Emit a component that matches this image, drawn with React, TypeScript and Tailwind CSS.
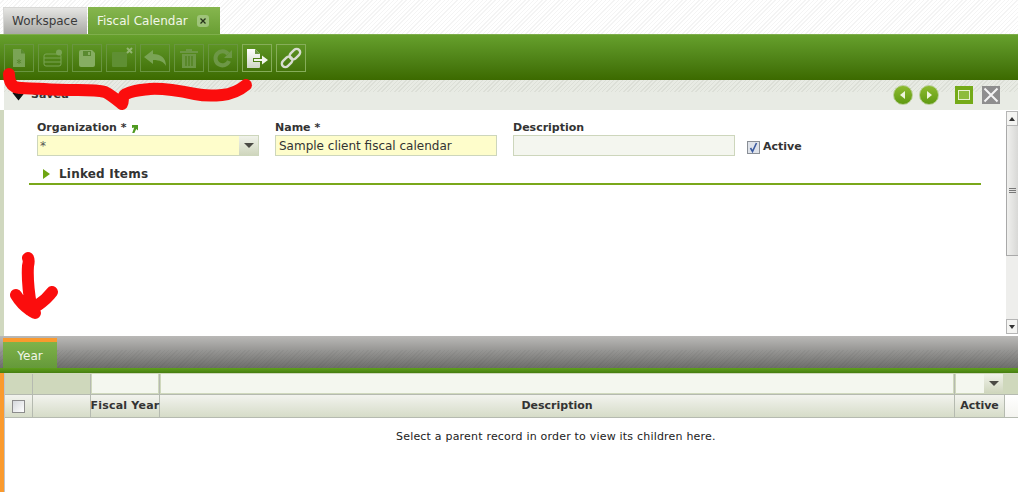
import React from "react";

const font = { fontFamily: '"DejaVu Sans", sans-serif' };

function ToolBtn({ children, active }: { children: React.ReactNode; active?: boolean }) {
  return (
    <div className={`w-[30px] h-[28px] flex items-center justify-center border ${active ? "border-[#86ad5a]" : "border-[#699540]"}`}>
      <svg width="24" height="24" viewBox="0 0 24 24">{children}</svg>
    </div>
  );
}

const dim = "#7aa455";
const dimDark = "#5a8a30";

function Toolbar() {
  return (
    <div className="h-[46px] bg-gradient-to-b from-[#66a02c] to-[#3c6a00] border-t border-[#7fae4c] flex items-center pl-[4px] gap-[4px] pt-[1px]">
      <ToolBtn>
        <path d="M6 3h8l4 4.5V21H6z" fill={dim} />
        <path d="M14 3l4 4.5h-4z" fill={dimDark} />
        <path d="M12 13v5M9.8 14.2l4.4 2.6M14.2 14.2l-4.4 2.6" stroke={dimDark} strokeWidth="1" />
      </ToolBtn>
      <ToolBtn>
        <rect x="3" y="8" width="17" height="12" rx="2" fill="none" stroke={dim} strokeWidth="1" />
        <path d="M3 12h17M3 16h17" stroke={dim} strokeWidth="1" />
        <circle cx="18" cy="6.5" r="3" fill={dim} />
      </ToolBtn>
      <ToolBtn>
        <path d="M4 6a2 2 0 012-2h11l3 3v12a2 2 0 01-2 2H6a2 2 0 01-2-2z" fill="#86ad62" />
        <rect x="8" y="5" width="8" height="5" fill={dimDark} />
        <rect x="13" y="6" width="2" height="3" fill="#86ad62" />
      </ToolBtn>
      <ToolBtn>
        <rect x="3" y="6" width="15" height="15" rx="1" fill="#5f8f33" />
        <path d="M18 2l5 5M23 2l-5 5" stroke="#93b572" strokeWidth="2" />
      </ToolBtn>
      <ToolBtn>
        <path d="M1 11l9-7v4c8 0 13 4 13 12-2-4-6-6-13-6v4z" fill={dim} />
      </ToolBtn>
      <ToolBtn>
        <path d="M3 5h18v2H3zM9 3h6v2H9z" fill="#6d9746" />
        <path d="M5 8h14v14H5z" fill="#6d9746" />
        <path d="M9 10v10M12 10v10M15 10v10" stroke="#4d7f18" strokeWidth="1.2" />
      </ToolBtn>
      <ToolBtn>
        <path d="M18 15a7 7 0 11-1-7" fill="none" stroke="#6d9746" strokeWidth="4" />
        <path d="M21 4v8h-8z" fill="#6d9746" />
      </ToolBtn>
      <ToolBtn active>
        <defs>
          <linearGradient id="docg" x1="0" y1="0" x2="0" y2="1">
            <stop offset="0" stopColor="#ffffff" />
            <stop offset="1" stopColor="#cfd6c6" />
          </linearGradient>
        </defs>
        <path d="M2 3h8l5 5v4H8v4h7v5a1 1 0 01-1 1H2z" fill="url(#docg)" />
        <path d="M10 3l5 5h-5z" fill="#6d9746" />
        <path d="M9 13h8v-3.5l6 4.5-6 4.5V15H9z" fill="#f2f5ec" />
      </ToolBtn>
      <ToolBtn active>
        <g fill="none" stroke="#d8ddd0" strokeWidth="2.4" transform="rotate(-45 12 12)">
          <rect x="0.5" y="8.5" width="12" height="7" rx="3.5" />
          <rect x="11.5" y="8.5" width="12" height="7" rx="3.5" />
        </g>
      </ToolBtn>
    </div>
  );
}

function RoundNav({ dir }: { dir: "l" | "r" }) {
  return (
    <div className="w-[20px] h-[20px] rounded-full bg-gradient-to-b from-[#8dbb2e] to-[#5f9a10] border border-[#b9cf96] flex items-center justify-center">
      <svg width="10" height="10" viewBox="0 0 10 10">
        <path d={dir === "l" ? "M7 1v8L2 5z" : "M3 1v8l5-4z"} fill="#eef5dc" />
      </svg>
    </div>
  );
}

function DropBtn({ className }: { className: string }) {
  return (
    <div className={`flex items-center justify-center bg-gradient-to-b from-[#f0f2ea] to-[#cfd6bd] ${className}`}>
      <div className="w-0 h-0 border-l-[5px] border-r-[5px] border-t-[5px] border-l-transparent border-r-transparent border-t-[#4a4a44]" />
    </div>
  );
}

function FieldLabel({ children }: { children: React.ReactNode }) {
  return <div className="text-[11px] leading-[14px] font-bold text-[#333]">{children}</div>;
}

function ScrollBtn({ up }: { up?: boolean }) {
  return (
    <div className="h-[15px] bg-[#f4f4f2] border border-[#b5b5b5] flex items-center justify-center">
      {up ? (
        <div className="w-0 h-0 border-l-[3px] border-r-[3px] border-b-[4px] border-l-transparent border-r-transparent border-b-[#333]" />
      ) : (
        <div className="w-0 h-0 border-l-[3px] border-r-[3px] border-t-[4px] border-l-transparent border-r-transparent border-t-[#333]" />
      )}
    </div>
  );
}

function Scrollbar() {
  return (
    <div className="w-[12px] flex flex-col pt-px pb-[2px]">
      <ScrollBtn up />
      <div className="h-[130px] border-l border-b border-[#a9a9a9] bg-gradient-to-r from-[#f0f0ee] to-[#d8d8d6] flex flex-col items-center justify-center gap-px">
        <div className="w-[7px] h-px bg-[#777]" />
        <div className="w-[7px] h-px bg-[#777]" />
        <div className="w-[7px] h-px bg-[#777]" />
      </div>
      <div className="flex-1 bg-[#eeeeec]" />
      <ScrollBtn />
    </div>
  );
}

function FormSection() {
  return (
    <div className="h-[226px] flex bg-white">
      <div className="w-[4px] bg-[#d0d8bf]" />
      <div className="flex-1 flex flex-col pt-[11px]">
        <div className="flex pl-[33px] gap-[16px]">
          <div className="w-[222px]">
            <FieldLabel>
              <span className="flex items-center gap-[4px]">
                Organization *
                <svg width="7" height="9" viewBox="0 0 7 9"><path d="M1 1h6v5.5L5.2 5 3.4 9H1.2l2-5.5L1 4z" fill="#4f9a20" /></svg>
              </span>
            </FieldLabel>
            <div className="h-[21px] flex border border-[#cdd6bc] bg-[#fefdcb]">
              <div className="flex-1 text-[12px] leading-[21px] pl-[2px] text-[#555]">*</div>
              <DropBtn className="w-[19px]" />
            </div>
          </div>
          <div className="w-[222px]">
            <FieldLabel>Name *</FieldLabel>
            <div className="h-[21px] border border-[#cdd6bc] bg-[#fefdcb] text-[12px] leading-[21px] pl-[3px] text-[#333]">
              Sample client fiscal calendar
            </div>
          </div>
          <div className="w-[222px]">
            <FieldLabel>Description</FieldLabel>
            <div className="h-[21px] border border-[#cdd6bc] bg-[#f4f6ef]" />
          </div>
          <div className="flex items-center gap-[3px] mt-[15px] ml-[-4px] h-[22px]">
            <div className="w-[13px] h-[13px] border border-[#8a8f96] bg-[#dfe3ea] flex items-center justify-center">
              <svg width="11" height="11" viewBox="0 0 11 11"><path d="M2.5 6l2 3.5L8.5 1" fill="none" stroke="#3a5aa0" strokeWidth="1.6" /></svg>
            </div>
            <span className="text-[11px] leading-[14px] font-bold text-[#333]">Active</span>
          </div>
        </div>
        <div className="ml-[25px] mr-[25px] mt-[6px] h-[19px] border-b-2 border-[#7aa81a] flex items-center pl-[14px] gap-[9px] box-content">
          <div className="w-0 h-0 border-t-[5px] border-b-[5px] border-l-[7px] border-t-transparent border-b-transparent border-l-[#6ea512]" />
          <span className="text-[12px] font-bold text-[#333] tracking-[0.2px]">Linked Items</span>
        </div>
      </div>
      <Scrollbar />
    </div>
  );
}

function Grid() {
  const headCell = "h-full border-r border-[#b5bab0] flex items-center justify-center text-[11px] font-bold text-[#333]";
  return (
    <div className="flex h-[119px]">
      <div className="w-[4px] bg-[#fa9a2e]" />
      <div className="w-px bg-[#c0c4cc]" />
      <div className="flex-1 flex flex-col bg-white">
        <div className="h-[22px] flex bg-[#cfd8bc] border-b border-[#b5bab0] pt-[1px]">
          <div className="w-[28px] border-r border-[#b5bab0]" />
          <div className="w-[58px] border-r border-[#b5bab0]" />
          <div className="w-[69px] border-r border-[#b5bab0] px-px pb-px"><div className="h-full bg-[#f4f7ef]" /></div>
          <div className="w-[795px] border-r border-[#b5bab0] px-px pb-px"><div className="h-full bg-[#f4f7ef]" /></div>
          <div className="w-[48px] pl-px pb-px flex">
            <div className="w-[28px] bg-[#f4f7ef]" />
            <DropBtn className="w-[19px]" />
          </div>
        </div>
        <div className="h-[23px] flex bg-gradient-to-b from-[#f2f3ee] to-[#d6dcc8] border-b border-[#b5bab0]">
          <div className={`${headCell} w-[28px]`}>
            <div className="w-[13px] h-[13px] border border-[#8c8c8c] bg-gradient-to-br from-[#d5d8dc] to-white" />
          </div>
          <div className={`${headCell} w-[58px]`} />
          <div className={`${headCell} w-[69px] tracking-[0.2px] whitespace-nowrap`}>Fiscal Year</div>
          <div className={`${headCell} w-[795px]`}>Description</div>
          <div className={`${headCell} w-[50px]`}>Active</div>
          <div className="flex-1 bg-gradient-to-b from-white to-[#f4f4f0]" />
        </div>
        <div className="text-[11px] tracking-[0.2px] text-[#222] pt-[11px] pl-[391px]">
          Select a parent record in order to view its children here.
        </div>
      </div>
    </div>
  );
}

export default function App() {
  return (
    <div className="relative w-[1018px] h-[492px] overflow-hidden bg-white" style={font}>
      <div className="h-[34px] flex items-end pl-[3px] gap-px bg-[repeating-linear-gradient(135deg,#ffffff_0,#ffffff_2px,#f4f4f4_2px,#f4f4f4_3px)]">
        <div className="w-[84px] h-[27px] bg-gradient-to-b from-[#e6e6e4] to-[#a9a9a5] border-t border-l border-[#d8d8d6] text-[12px] leading-[26px] text-[#3a3a3a] pl-[8px]">
          Workspace
        </div>
        <div className="w-[132px] h-[27px] bg-gradient-to-b from-[#86b64e] to-[#6a9f34] text-[12px] text-[#f2f6e8] pl-[9px] flex items-center gap-[9px]">
          Fiscal Calendar
          <span className="w-[12px] h-[12px] rounded-[3px] bg-[#9fc47a] flex items-center justify-center">
            <svg width="6" height="6" viewBox="0 0 6 6"><path d="M0.5 0.5l5 5M5.5 0.5l-5 5" stroke="#26331a" strokeWidth="1.3" /></svg>
          </span>
        </div>
      </div>
      <Toolbar />
      <div className="h-[30px] ml-[4px] bg-[#e8ebe4] flex items-center pl-[8px] pr-[18px] relative">
        <div className="absolute left-0 right-0 top-0 h-[12px] bg-[repeating-linear-gradient(135deg,#e8ebe4_0,#e8ebe4_2px,#dcdfd7_2px,#dcdfd7_3px)]" />
        <svg width="13" height="12" viewBox="0 0 13 12" className="relative"><path d="M0.5 4L3 1.5l3.5 3 3.5-3L12.5 4l-6 7.5z" fill="#111" /></svg>
        <span className="relative ml-[6px] text-[11px] font-bold text-[#333]">Saved</span>
        <div className="relative ml-auto flex items-center">
          <RoundNav dir="l" />
          <div className="w-[6px]" />
          <RoundNav dir="r" />
          <div className="w-[16px]" />
          <div className="w-[18px] h-[18px] bg-[#74aa18] flex items-center justify-center">
            <div className="w-[12px] h-[10px] border border-[#e6f0cf] bg-[#8dbb3c]" />
          </div>
          <div className="w-[9px]" />
          <div className="w-[18px] h-[18px] bg-[#8e8e8e] flex items-center justify-center">
            <svg width="16" height="16" viewBox="0 0 16 16"><path d="M1.5 1.5l13 13M14.5 1.5l-13 13" stroke="#f4f4f4" strokeWidth="2" /></svg>
          </div>
        </div>
      </div>
      <FormSection />
      <div className="relative h-[32px] bg-gradient-to-b from-[#bab9b7] to-[#6e6e6c] pl-[3px] flex items-end">
        <div className="absolute left-0 right-0 bottom-0 h-[18px] bg-[repeating-linear-gradient(135deg,transparent_0,transparent_2px,rgba(0,0,0,0.04)_2px,rgba(0,0,0,0.04)_3px)]" />
        <div className="relative w-[54px] h-[30px] border-t-[4px] border-[#fa9a2e] bg-gradient-to-b from-[#7fb34a] to-[#65993a] text-[12px] text-[#f2f6e8] flex items-center justify-center pt-[2px]">
          Year
        </div>
      </div>
      <div className="h-[5px] bg-gradient-to-b from-[#5fa01c] to-[#467e10]" />
      <Grid />

      <svg className="absolute left-0 top-0 pointer-events-none" width="1018" height="492" viewBox="0 0 1018 492">
        <path
          d="M9 74C9 80 11 85 15 87C22 89 30 88 44 89C56 90 66 90 78 90C88 90 98 90 105 92C111 95 117 100 122 104C124 101 121 97 126 94C134 90 142 90 150 89C165 88 180 91 195 94C204 96 212 96 222 95C232 94 240 90 246 85"
          fill="none"
          stroke="#fb0d0d"
          strokeWidth="12"
          strokeLinecap="round"
          strokeLinejoin="round"
        />
        <path
          d="M28 258c1 2 1 4 0 8-1 14 1 28 3 40l3 6M16 295c3 5 8 11 14 15 2 1 4 3 5 3M52 292c-3 4-8 9-14 13"
          fill="none"
          stroke="#fb0d0d"
          strokeWidth="12"
          strokeLinecap="round"
          strokeLinejoin="round"
        />
      </svg>
    </div>
  );
}
